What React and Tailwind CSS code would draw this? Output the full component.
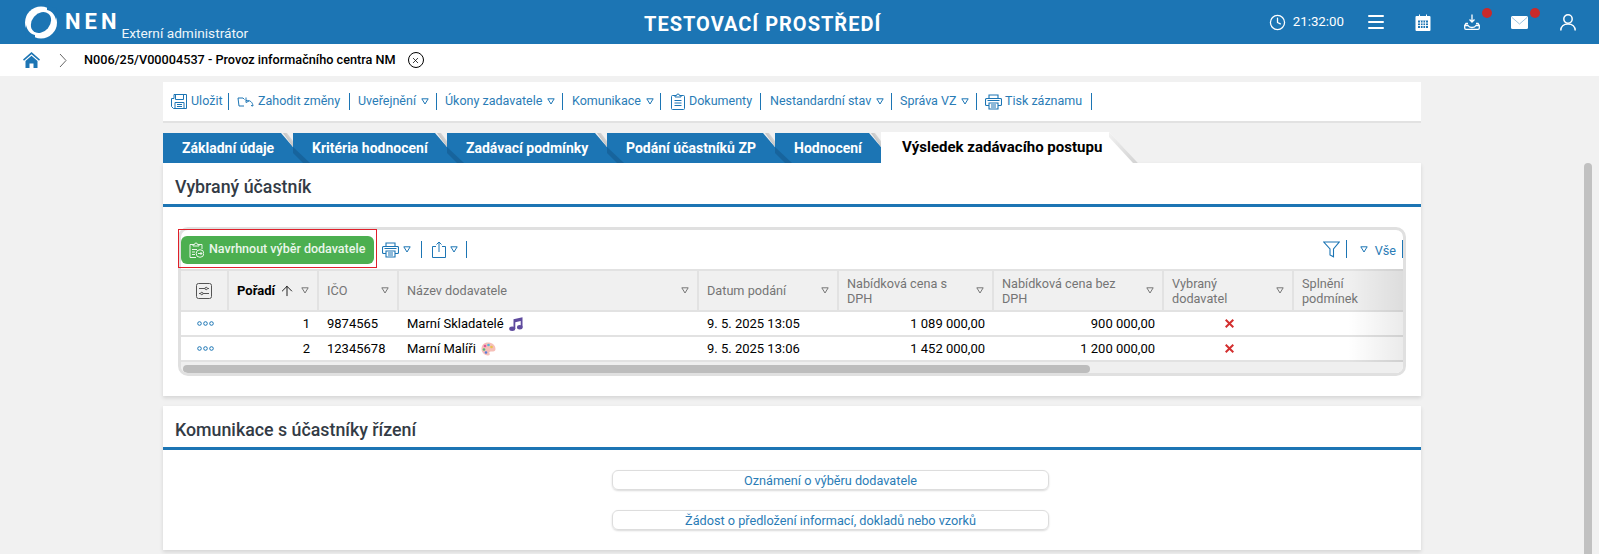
import { Clock, ArrowUp, X } from 'lucide-react';

const Caret = ({ gray }) => (
  <svg width="8" height="7" viewBox="0 0 8 7" className={`shrink-0 ${gray ? 'text-[#777]' : 'text-[#1c75b4]'}`}>
    <path d="M.8.8h6.4L4 6z" fill="none" stroke="currentColor" strokeWidth="1" />
  </svg>
);

const SaveIcon = () => (
  <svg width="17" height="17" viewBox="0 0 17 17" fill="none" stroke="#1c75b4" strokeWidth="1">
    <path d="M3 1.500h12.500v14h-13l-2-2v-8h2.500zM4.500 1.500v5h8v-5M4 15.500v-6h9v6M6 11.500h5M6 13.500h5" />
  </svg>
);

const UndoIcon = () => (
  <svg width="17" height="13" viewBox="0 0 17 13" fill="none" stroke="#1c75b4" strokeWidth="1">
    <path d="M1 3h5l1.500 1.500M1 3l1 8h5M16 11c-.5-4-3-6-7-5.500M9 2.500v5l3-1.500M16 11l-2-.5" />
  </svg>
);

const ClipboardIcon = () => (
  <svg width="14" height="17" viewBox="0 0 14 17" fill="none" stroke="#1c75b4" strokeWidth="1">
    <path d="M4 2.500H1.500a1 1 0 0 0-1 1v12a1 1 0 0 0 1 1h11a1 1 0 0 0 1-1v-12a1 1 0 0 0-1-1H10M4 4h6V2.500H8.500a1.500 1.500 0 0 0-3 0H4zM3.500 7.500h7M3.500 10h7M3.500 12.500h7" />
  </svg>
);

const PrintIcon = () => (
  <svg width="17" height="16" viewBox="0 0 17 16" fill="none" stroke="#1c75b4" strokeWidth="1.100">
    <path d="M4 4.500V1h9v3.500M4 11.500H1.500a1 1 0 0 1-1-1v-5a1 1 0 0 1 1-1h14a1 1 0 0 1 1 1v5a1 1 0 0 1-1 1H13M4 9h9v6H4zM6 11h5M6 13h5M2.500 6.500h12" />
  </svg>
);

const UploadIcon = () => (
  <svg width="14" height="17" viewBox="0 0 14 17" fill="none" stroke="#1c75b4" strokeWidth="1">
    <path d="M4 5.500H.5v11h13v-11H10M7 11V1M4.500 3.500 7 1l2.500 2.500" />
  </svg>
);

const FunnelIcon = () => (
  <svg width="17" height="17" viewBox="0 0 17 17" fill="none" stroke="#1c75b4" strokeWidth="1.100">
    <path d="M.8 1h15.400l-5.700 7v7.800l-3.500-1.800V8z" />
  </svg>
);

const Dots = () => (
  <svg width="17" height="5" viewBox="0 0 17 5" fill="none" stroke="#1c75b4" strokeWidth="1">
    <circle cx="2.500" cy="2.500" r="1.800" />
    <circle cx="8.500" cy="2.500" r="1.800" />
    <circle cx="14.500" cy="2.500" r="1.800" />
  </svg>
);

const Music = () => (
  <svg width="14" height="14" viewBox="0 0 14 14" fill="#5f4b9e" className="ml-[5px]">
    <path d="M4.500 2.200 13.500.2v10h-1.800V4L6.300 5.200v6.800H4.500z" />
    <ellipse cx="3.200" cy="11.800" rx="3" ry="2.200" />
    <ellipse cx="10.800" cy="10.200" rx="2.800" ry="2.200" />
  </svg>
);

const Palette = () => (
  <svg width="15" height="14" viewBox="0 0 15 14" className="ml-[5px]">
    <path d="M7 .5C3 .5.500 3 .500 6.800c0 3.800 3 6.700 6.500 6.700 2 0 2-1.300 1.500-2.200-.5-1 0-1.800 1.200-1.800h2.500c1.500 0 2.300-1 2.300-2.500C14.500 3 11 .5 7 .5z" fill="#f6bfb8" />
    <circle cx="4" cy="4" r="1.300" fill="#e0559b" />
    <circle cx="7.500" cy="3" r="1.300" fill="#55b5d9" />
    <circle cx="3" cy="7.500" r="1.300" fill="#57b87c" />
    <circle cx="10.500" cy="5" r="1.300" fill="#e9c14a" />
    <circle cx="5" cy="10.500" r="1.300" fill="#5c7ad6" />
  </svg>
);

const toolbar = [
  { icon: <SaveIcon />, label: 'Uložit', cls: 'w-[58px] gap-[3px]' },
  { icon: <UndoIcon />, label: 'Zahodit změny', cls: 'w-[121px] pl-[8px] gap-[4px]' },
  { label: 'Uveřejnění', caret: true, cls: 'w-[87px] pl-[8px] gap-[5px]' },
  { label: 'Úkony zadavatele', caret: true, cls: 'w-[126px] pl-[8px] gap-[5px]' },
  { label: 'Komunikace', caret: true, cls: 'w-[98px] pl-[9px] gap-[5px]' },
  { icon: <ClipboardIcon />, label: 'Dokumenty', cls: 'w-[100px] pl-[10px] gap-[4px]' },
  { label: 'Nestandardní stav', caret: true, cls: 'w-[131px] pl-[9px] gap-[5px]' },
  { label: 'Správa VZ', caret: true, cls: 'w-[85px] pl-[8px] gap-[5px]' },
  { icon: <PrintIcon />, label: 'Tisk záznamu', cls: 'w-[115px] pl-[8px] gap-[3px]' },
];

const tabs = [
  { label: 'Základní údaje', cls: 'w-[130px] pl-[19px]', id: 'a' },
  { label: 'Kritéria hodnocení', cls: 'w-[154px] pl-[19px]', id: 'b' },
  { label: 'Zadávací podmínky', cls: 'w-[160px] pl-[19px]', id: 'c' },
  { label: 'Podání účastníků ZP', cls: 'w-[168px] pl-[19px]', id: 'd' },
  { label: 'Hodnocení', cls: 'w-[106px] pl-[19px]', id: 'e', last: true },
];

const Tab = ({ label, cls, id, last }) => (
  <div className={`relative h-[30px] flex items-center bg-[#1c75b4] text-white font-bold text-[14px] ${cls}`}>
    <span className="relative z-20">{label}</span>
    <svg width="30" height="30" viewBox="0 0 30 30" className="absolute top-0 left-[calc(100%-12px)] z-10 overflow-visible">
      <defs>
        <linearGradient id={`fold-${id}`} x1="0" y1="1" x2="1" y2="0">
          <stop offset="0" stopColor="#9a9a9a" />
          <stop offset="1" stopColor="#efefef" />
        </linearGradient>
      </defs>
      <path d="M0 0h12v14z" fill="#f1f1f1" />
      <path d="M2 0l10 14V8L6 0z" fill={`url(#fold-${id})`} />
      {!last && <path d="M12 14l17 16h-7l-10-10z" fill="#155f95" opacity=".75" />}
    </svg>
  </div>
);

const cols = 'grid grid-cols-[48px_90px_80px_300px_140px_155px_170px_130px_109px]';

const HeadCell = ({ children, caret = true, bold, end }) => (
  <div className={`flex items-center justify-between pl-2 pr-[8px] ${end ? '' : 'border-r-2 border-[#e2e2e2]'}`}>
    <span className={`leading-[15px] ${bold ? 'font-bold text-black text-[13px]' : 'text-[#757575] text-[12.700px]'}`}>{children}</span>
    {caret && <Caret gray />}
  </div>
);

const Cell = ({ children, right, center }) => (
  <div className={`flex items-center ${right ? 'justify-end pl-2 pr-[9px]' : 'px-2'} ${center ? 'justify-center' : ''}`}>
    {children}
  </div>
);

const rows = [
  { n: 1, ico: '9874565', name: 'Marní Skladatelé', emoji: <Music />, date: '9. 5. 2025 13:05', s: '1 089 000,00', b: '900 000,00' },
  { n: 2, ico: '12345678', name: 'Marní Malíři', emoji: <Palette />, date: '9. 5. 2025 13:06', s: '1 452 000,00', b: '1 200 000,00' },
];

export default function App() {
  return (
    <div className="h-[554px] overflow-hidden bg-[#f1f1f1] font-['Roboto',sans-serif] text-[13px]">
      {/* Header */}
      <header className="relative h-[44px] bg-[#1c75b4] text-white flex items-center">
        <div className="flex items-center pl-[25px] w-[300px]">
          <svg width="32" height="33" viewBox="0 0 32 33">
            <circle cx="16" cy="16.500" r="16" fill="#fff" />
            <ellipse cx="16" cy="16.500" rx="11.500" ry="9" fill="#1c75b4" transform="rotate(-50 16 16.500)" />
            <path d="M22 0 32 2 31 14C30 9 27 5 22 4z" fill="#1c75b4" />
            <path d="M10 33 0 31 1 19C2 24 5 28 10 29z" fill="#1c75b4" />
          </svg>
          <div className="ml-[8px] text-[22px] font-bold tracking-[4px] leading-none">NEN</div>
          <div className="self-end ml-[1px] text-[13.700px] leading-none -mb-[2px] text-[#eef5fa]">Externí administrátor</div>
        </div>
        <div className="absolute left-[644px] top-[12px] text-[20px] leading-[24px] font-bold tracking-[1px]">TESTOVACÍ PROSTŘEDÍ</div>
        <div className="ml-auto flex items-center pr-[23px]">
          <Clock size={17} strokeWidth={1.800} />
          <span className="ml-[7px] text-[13.300px]">21:32:00</span>
          <div className="ml-[24px] w-[16px] flex flex-col gap-[3.500px]">
            <div className="h-[2.500px] rounded bg-white" />
            <div className="h-[2.500px] rounded bg-white" />
            <div className="h-[2.500px] rounded bg-white" />
          </div>
          <svg width="16" height="17" viewBox="0 0 16 17" className="ml-[31px]">
            <path d="M1.500 2H4V.5h1V2h6V.5h1V2h2.500a1 1 0 0 1 1 1v13a1 1 0 0 1-1 1h-13a1 1 0 0 1-1-1V3a1 1 0 0 1 1-1z" fill="#fff" />
            <path d="M3 6.500h10v7.500H3z" fill="#1c75b4" />
            <path d="M5.500 6.500V14M8 6.500V14M10.500 6.500V14M3 9h10M3 11.500h10" stroke="#fff" strokeWidth=".9" />
          </svg>
          <div className="relative ml-[33px]">
            <svg width="16" height="16" viewBox="0 0 16 16" fill="none" stroke="#fff" strokeWidth="1.300" className="block">
              <path d="M8 .5v7M5.500 5.500 8 8l2.500-2.500" />
              <path d="M4 9.500H2l-1.300 2v2.500a1.300 1.300 0 0 0 1.300 1.300h12a1.300 1.300 0 0 0 1.300-1.300v-2.500l-1.300-2h-2M1 11.500h3c.8 1.500 2 2 4 2s3.200-.5 4-2h3" />
            </svg>
            <span className="absolute -top-[6px] -right-[12px] w-[10px] h-[10px] rounded-full bg-[#c92a2a]" />
          </div>
          <div className="relative ml-[31px]">
            <svg width="17" height="13" viewBox="0 0 17 13" className="block">
              <rect width="17" height="13" rx="1.500" fill="#fff" />
              <path d="M1 1.500 8.500 8 16 1.500" fill="none" stroke="#9cc4de" strokeWidth="1" />
            </svg>
            <span className="absolute -top-[8px] -right-[12px] w-[10px] h-[10px] rounded-full bg-[#c92a2a]" />
          </div>
          <svg width="16" height="17" viewBox="0 0 16 17" fill="none" stroke="#fff" strokeWidth="1.500" className="ml-[32px]">
            <circle cx="8" cy="5" r="4.200" />
            <path d="M.8 16.500c0-3.800 2.800-6.500 7.200-6.500s7.200 2.700 7.200 6.500" />
          </svg>
        </div>
      </header>

      {/* Breadcrumb */}
      <div className="h-[32px] bg-white flex items-center pl-[23px]">
        <svg width="17" height="16" viewBox="0 0 17 16" fill="#1c75b4">
          <path d="M8.500 0 17 7.500l-1 1.200L8.500 2.200 1 8.700 0 7.500z" />
          <path d="M2.500 9 8.500 3.800 14.500 9v7h-4v-4.500h-4V16h-4z" />
        </svg>
        <svg width="8" height="15" viewBox="0 0 8 15" fill="none" stroke="#666" strokeWidth="1" className="ml-[19px]">
          <path d="M1 1l6 6.500L1 14" />
        </svg>
        <span className="ml-[17px] font-medium text-black text-[12.700px]">N006/25/V00004537 - Provoz informačního centra NM</span>
        <span className="ml-[12px] w-[16px] h-[16px] rounded-full border border-black flex items-center justify-center">
          <X size={9} strokeWidth={2} className="text-black" />
        </span>
      </div>

      <div className="flex">
        <main className="flex-1 min-w-0 pt-[6px]">
          <div className="w-[1258px] mx-auto">
            {/* Toolbar */}
            <div className="h-[41px] bg-white border-b-2 border-[#e2e2e2] flex items-center pl-2 text-[#2a7cb6] text-[12.500px]">
              {toolbar.map((item) => (
                <div key={item.label} className={`h-[17px] flex items-center border-r-[1.500px] border-[#1c75b4] ${item.cls}`}>
                  {item.icon}
                  <span className="whitespace-nowrap">{item.label}</span>
                  {item.caret && <Caret />}
                </div>
              ))}
            </div>

            {/* Tabs */}
            <div className="flex items-end h-[40px] relative z-10">
              {tabs.map((t) => <Tab key={t.id} {...t} />)}
              <div className="relative h-[31px] w-[228px] bg-white flex items-center pl-[21px] font-bold text-[15px] text-black whitespace-nowrap">
                Výsledek zadávacího postupu
                <svg width="30" height="31" viewBox="0 0 30 31" className="absolute top-0 left-full">
                  <defs>
                    <linearGradient id="fold-active" x1="0" y1="0" x2="1" y2="1">
                      <stop offset="0" stopColor="#f1f1f1" />
                      <stop offset="1" stopColor="#d2d2d2" />
                    </linearGradient>
                  </defs>
                  <path d="M0 0l29 31H0z" fill="#fff" />
                  <path d="M0 0l29 31h-5L0 5z" fill="url(#fold-active)" />
                </svg>
              </div>
            </div>

            {/* Selected participant */}
            <section className="bg-white shadow-[0_2px_4px_rgba(0,0,0,0.12)] h-[233px]">
              <h2 className="h-[41px] flex items-center pl-3 pt-[7px] text-[17.800px] font-medium text-[#333b45]">Vybraný účastník</h2>
              <div className="h-[3px] bg-[#1c75b4]" />
              <div className="relative mt-5 mx-[15px]">
                <div className="h-[149px] border-[3px] border-[#e0e0e0] rounded-[10px] overflow-hidden relative">
                  <div className="h-[39px] flex items-center">
                    <button className="h-[28px] w-[193px] rounded-[6px] bg-[#4caf50] text-[#eaf6ea] text-[12.500px] font-medium flex items-center pl-2 gap-[5px]">
                      <svg width="15" height="16" viewBox="0 0 15 16" fill="none" stroke="#eaf6ea" strokeWidth="1">
                        <path d="M4 2.500H1v13h6M10 2.500h3V7M4 4h6V2.500H8.500a1.500 1.500 0 0 0-3 0H4zM3 7.500h5M3 10h3M3 12.500h3" />
                        <circle cx="11" cy="11.500" r="3.800" />
                        <path d="M9 11.500h4M11.500 10l1.500 1.500-1.500 1.500" />
                      </svg>
                      Navrhnout výběr dodavatele
                    </button>
                    <div className="ml-2 flex items-center gap-[4px]"><PrintIcon /><Caret /></div>
                    <div className="ml-[10px] h-[17px] border-l-[1.500px] border-[#1c75b4]" />
                    <div className="ml-[10px] flex items-center gap-[4px]"><UploadIcon /><Caret /></div>
                    <div className="ml-[8px] h-[17px] border-l-[1.500px] border-[#1c75b4]" />
                    <div className="ml-auto flex items-center text-[#2a7cb6] text-[12.700px]">
                      <FunnelIcon />
                      <div className="ml-[6px] h-[18px] border-l-[1.500px] border-[#1c75b4]" />
                      <div className="ml-[13px]"><Caret /></div>
                      <span className="ml-[7px] mt-[2px]">Vše</span>
                      <div className="ml-[6px] h-[18px] border-l-[1.500px] border-[#1c75b4]" />
                    </div>
                  </div>

                  <div className="relative">
                    <div className={`${cols} h-[43px] bg-[#f0f0f0] border-y-2 border-[#e2e2e2]`}>
                      <div className="flex items-center justify-center border-r-2 border-[#e2e2e2]">
                        <svg width="16" height="16" viewBox="0 0 16 16" fill="none" stroke="#555" strokeWidth="1">
                          <rect x=".5" y=".5" width="15" height="15" rx="2" />
                          <path d="M3 5.500h6M11.500 5.500H13M3 10.500h1.500M7 10.500h6" />
                          <circle cx="10.200" cy="5.500" r="1.200" />
                          <circle cx="5.800" cy="10.500" r="1.200" />
                        </svg>
                      </div>
                      <HeadCell bold>
                        <span className="flex items-center gap-[4px]">Pořadí <ArrowUp size={16} strokeWidth={1.300} /></span>
                      </HeadCell>
                      <HeadCell>IČO</HeadCell>
                      <HeadCell>Název dodavatele</HeadCell>
                      <HeadCell>Datum podání</HeadCell>
                      <HeadCell>Nabídková cena s<br />DPH</HeadCell>
                      <HeadCell>Nabídková cena bez<br />DPH</HeadCell>
                      <HeadCell>Vybraný<br />dodavatel</HeadCell>
                      <HeadCell caret={false} end>Splnění<br />podmínek</HeadCell>
                    </div>
                    {rows.map((r) => (
                      <div key={r.n} className={`${cols} h-[25px] border-b-2 border-[#e2e2e2] text-black`}>
                        <Cell center><Dots /></Cell>
                        <Cell right>{r.n}</Cell>
                        <Cell>{r.ico}</Cell>
                        <Cell>{r.name}{r.emoji}</Cell>
                        <Cell>{r.date}</Cell>
                        <Cell right>{r.s}</Cell>
                        <Cell right>{r.b}</Cell>
                        <Cell center>
                          <svg width="9" height="9" viewBox="0 0 9 9" stroke="#d32f2f" strokeWidth="2"><path d="M.7.7l7.600 7.600M8.300.7.700 8.300" /></svg>
                        </Cell>
                        <Cell />
                      </div>
                    ))}
                    <div className="absolute top-0 bottom-0 right-0 w-[55px] bg-gradient-to-r from-transparent to-black/8" />
                  </div>

                  <div className="h-[12px] bg-[#efefef] pt-[3px] pl-[2px]">
                    <div className="h-[8px] w-[907px] rounded-full bg-[#bdbdbd]" />
                  </div>
                </div>
                <div className="absolute left-0 top-[2px] w-[199px] h-[39px] border border-[#e0202a]" />
              </div>
            </section>

            {/* Communication */}
            <section className="mt-[10px] h-[144px] bg-white shadow-[0_2px_4px_rgba(0,0,0,0.12)]">
              <h2 className="h-[41px] flex items-center pl-3 pt-[7px] text-[17.800px] font-medium text-[#333b45]">Komunikace s účastníky řízení</h2>
              <div className="h-[3px] bg-[#1c75b4]" />
              <div className="flex flex-col gap-[20px] pt-5 pl-[449px]">
                <button className="w-[437px] h-[20px] rounded-[6px] border border-[#ddd] shadow-[0_1px_2px_rgba(0,0,0,0.15)] text-[#2a7cb6] text-[12.700px] text-center">Oznámení o výběru dodavatele</button>
                <button className="w-[437px] h-[20px] rounded-[6px] border border-[#ddd] shadow-[0_1px_2px_rgba(0,0,0,0.15)] text-[#2a7cb6] text-[12.700px] text-center">Žádost o předložení informací, dokladů nebo vzorků</button>
              </div>
            </section>
          </div>
        </main>

        {/* Page scrollbar */}
        <div className="w-[15px] shrink-0 pt-[87px]">
          <div className="w-[8px] h-[500px] rounded-full bg-[#c1c1c1]" />
        </div>
      </div>
    </div>
  );
}
